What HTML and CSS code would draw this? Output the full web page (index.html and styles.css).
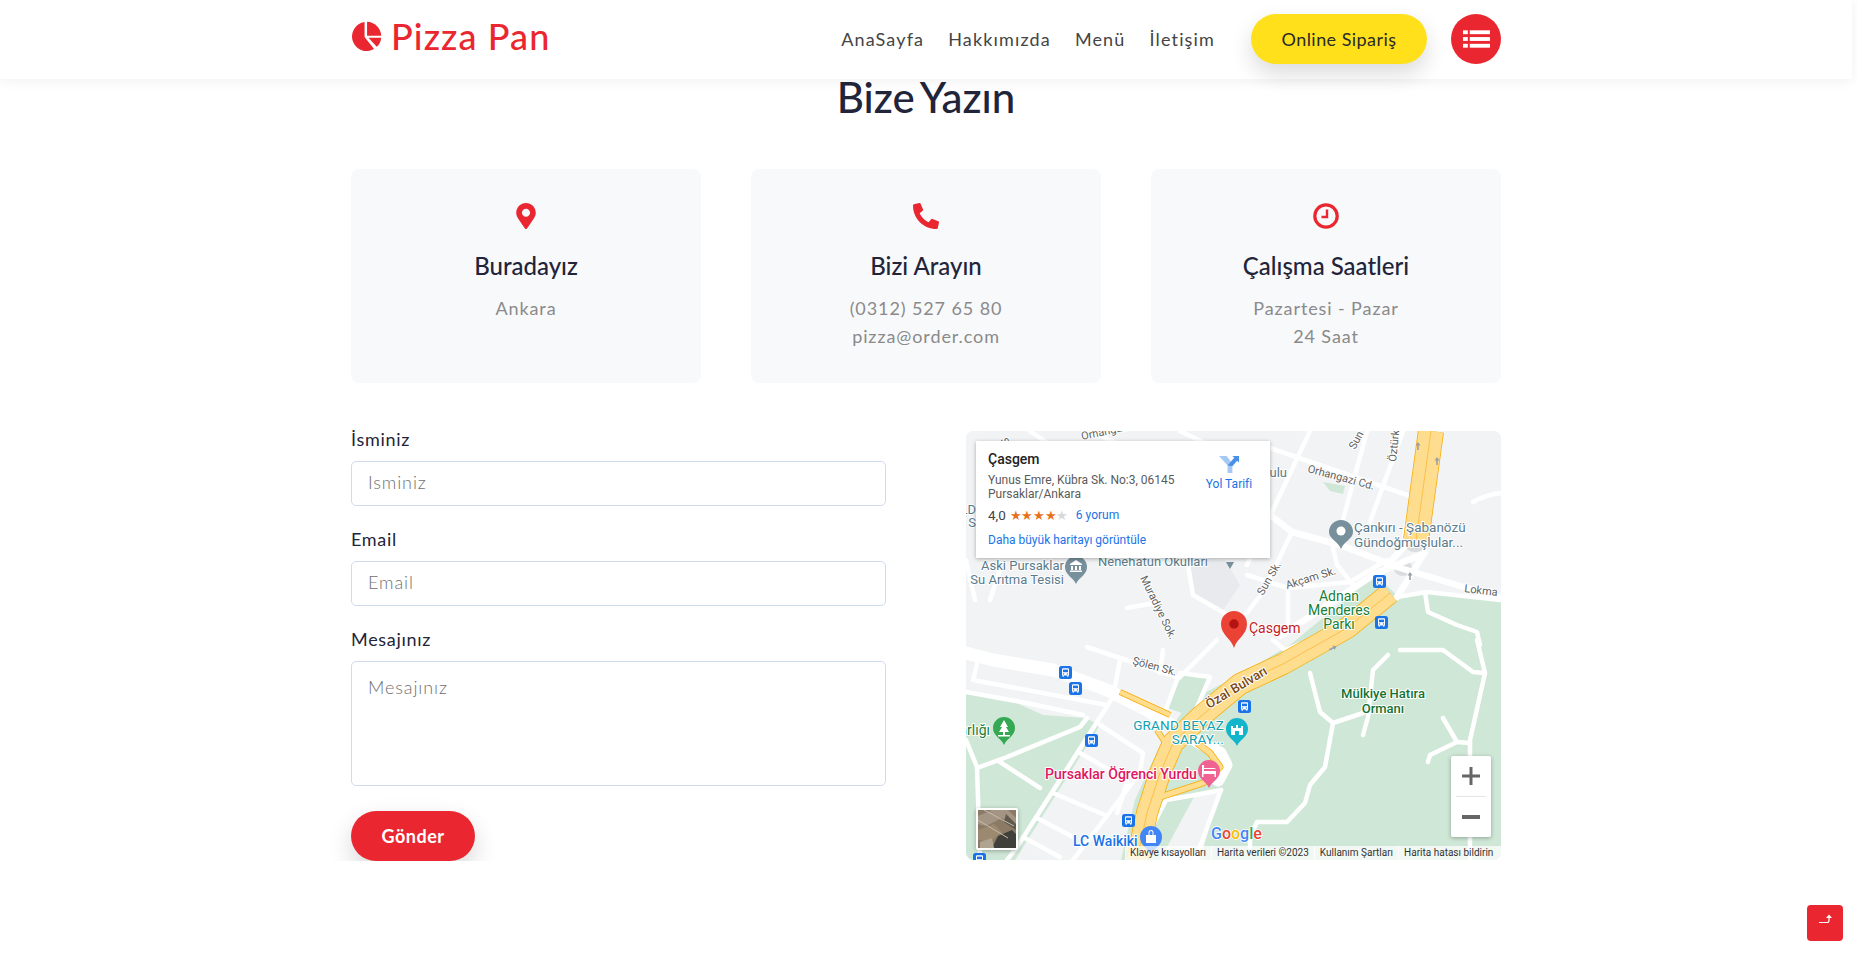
FILE: index.html
```html
<!DOCTYPE html>
<html lang="tr">
<head>
<meta charset="utf-8">
<title>Pizza Pan - Bize Yazın</title>
<link rel="stylesheet" href="styles.css">
</head>
<body>
<header class="site-header">
  <div class="container header-row">
    <a class="logo" href="#">
      <svg class="logo-icon" viewBox="0 0 32 32"><path d="M14 1.1V16.6L23.8 28.8A15 15 0 1 1 14 1.1Z"/><path d="M16.6 .8A15.2 15.2 0 0 1 31.2 15.2H16.6Z"/><path d="M18 17.2H31.2A15 15 0 0 1 26.6 26.7Z"/></svg>
      <span>Pizza Pan</span>
    </a>
    <nav class="nav">
      <a href="#">AnaSayfa</a>
      <a href="#">Hakkımızda</a>
      <a href="#">Menü</a>
      <a href="#">İletişim</a>
    </nav>
    <a class="order-btn" href="#">Online Sipariş</a>
    <a class="menu-btn" href="#" aria-label="Menü">
      <svg viewBox="0 0 28 20"><rect x="0" y="1" width="5" height="4"/><rect x="7" y="1" width="21" height="4"/><rect x="0" y="8" width="5" height="4"/><rect x="7" y="8" width="21" height="4"/><rect x="0" y="15" width="5" height="4"/><rect x="7" y="15" width="21" height="4"/></svg>
    </a>
  </div>
</header>

<main class="container">
  <h1 class="page-title">Bize Yazın</h1>

  <section class="cards">
    <article class="card">
      <svg class="card-icon" viewBox="0 0 384 512"><path d="M172.268 501.67C26.97 291.031 0 268.413 0 192 0 85.961 85.961 0 192 0s192 85.961 192 192c0 76.413-26.97 99.031-172.268 309.67-9.535 13.774-29.93 13.773-39.464 0zM192 272c44.183 0 80-35.817 80-80s-35.817-80-80-80-80 35.817-80 80 35.817 80 80 80z"/></svg>
      <h2>Buradayız</h2>
      <p>Ankara</p>
    </article>
    <article class="card">
      <svg class="card-icon" viewBox="0 0 512 512"><path d="M497.39 361.8l-112-48a24 24 0 0 0-28 6.9l-49.6 60.6A370.66 370.66 0 0 1 130.6 204.11l60.6-49.6a23.94 23.94 0 0 0 6.9-28l-48-112A24.16 24.16 0 0 0 122.6.61l-104 24A24 24 0 0 0 0 48c0 256.5 207.9 464 464 464a24 24 0 0 0 23.4-18.6l24-104a24.29 24.29 0 0 0-14.01-27.6z"/></svg>
      <h2>Bizi Arayın</h2>
      <p>(0312) 527 65 80</p>
      <p>pizza@order.com</p>
    </article>
    <article class="card">
      <svg class="card-icon" viewBox="0 0 26 26"><circle class="clock-ring" cx="13" cy="13" r="11.2"/><path class="clock-hand" d="M14 6.5V14H8.5"/></svg>
      <h2>Çalışma Saatleri</h2>
      <p>Pazartesi - Pazar</p>
      <p>24 Saat</p>
    </article>
  </section>

  <section class="contact">
    <form class="form">
      <div class="field">
        <label for="ad">İsminiz</label>
        <input id="ad" type="text" placeholder="Isminiz">
      </div>
      <div class="field">
        <label for="mail">Email</label>
        <input id="mail" type="text" placeholder="Email">
      </div>
      <div class="field">
        <label for="mesaj">Mesajınız</label>
        <textarea id="mesaj" placeholder="Mesajınız"></textarea>
      </div>
      <button class="send-btn" type="button">Gönder</button>
    </form>

    <div class="map">
      <svg class="map-canvas" viewBox="966 431 535 429">
        <defs>
          <symbol id="bus" viewBox="0 0 13 13">
            <rect width="13" height="13" rx="2.5" fill="#1a73e8"/>
            <path d="M3 3.2Q3 2.2 4 2.2H9Q10 2.2 10 3.2V9.6H9.4V10.8H8.2V9.6H4.8V10.8H3.6V9.6H3Z" fill="#fff"/>
            <rect x="4" y="3.6" width="5" height="2.6" fill="#1a73e8"/>
            <rect x="4" y="7.4" width="1.2" height="1.1" fill="#1a73e8"/><rect x="7.8" y="7.4" width="1.2" height="1.1" fill="#1a73e8"/>
          </symbol>
          <symbol id="harrow" viewBox="0 0 8 8"><path d="M4 0L6.5 3.4H4.8V8H3.2V3.4H1.5Z" fill="#9aa0a6"/></symbol>
        </defs>

        <rect x="966" y="431" width="535" height="429" fill="#f1f3f4"/>

        <g class="green">
          <path d="M966 693L1003 697L1043 715L1085 718L1100 725L1015 860H966Z"/>
          <path d="M1121 860L1135 800L1160 745L1190 700L1230 680L1290 645L1375 575L1400 598L1427 592L1501 602V860H1200L1220 790L1195 795L1160 860Z"/>
          <path d="M1180 673L1210 677L1193 717L1168 708Z"/>
          <path d="M1323 482L1345 486L1343 494L1330 491Z"/>
          <path d="M966 770H976L979 820L966 810Z"/>
        </g>
        <path d="M1187 558L1193 595L1222 612L1240 585L1225 560Z" fill="#e8eaed"/>
        <ellipse cx="1403" cy="568" rx="9" ry="8" fill="#dadce0"/>
        <ellipse cx="1415" cy="548" rx="8" ry="4" fill="#dadce0"/>

        <g class="road w5">
          <path d="M1270 448L1413 497"/>
          <path d="M1310 431L1247 565"/>
          <path d="M1367 431L1343 520"/>
          <path d="M1403 431L1370 522"/>
          <path d="M1292 532L1263 592L1243 618"/>
          <path d="M1247 575L1288 588L1350 582L1387 560"/>
          <path d="M1333 548L1337 565L1353 585"/>
          <path d="M1288 588V632"/>
          <path d="M1127 608L1160 602"/>
          <path d="M1187 558L1193 595L1240 622"/>
          <path d="M1473 502Q1485 495 1501 493"/>
          <path d="M966 692L1027 703L1083 715"/>
          <path d="M966 740L977 767L980 860"/>
          <path d="M977 768L1007 757L1080 727L1087 718"/>
          <path d="M1000 762L1040 788"/>
          <path d="M1113 697L1017 847L1007 860"/>
          <path d="M1100 725L1143 753L1140 773L1073 860"/>
          <path d="M1080 753L1127 780"/>
          <path d="M1053 793L1093 810L1105 815"/>
          <path d="M1037 818L1073 837"/>
          <path d="M1023 837L1060 857"/>
          <path d="M1087 647L1120 658L1177 677"/>
          <path d="M1120 660L1113 697"/>
          <path d="M1163 650L1160 673"/>
          <path d="M1217 640L1177 680L1163 717"/>
          <path d="M1127 783L1117 813"/>
          <path d="M978 660L973 680L1107 705"/>
          <path d="M1180 673L1210 677L1193 717"/>
          <path d="M1166 800L1195 795L1221 790"/>
          <path d="M1135 860L1166 800"/>
          <path d="M1221 790L1195 860"/>
          <path d="M1030 431L1050 445"/>
          <path d="M1090 431L1120 445"/>
          <path d="M966 560L975 600"/>
          <path d="M1203 442L1180 431"/>
          <path d="M1000 570L990 600"/>
          <path d="M1400 650H1443L1473 672L1485 673"/>
          <path d="M1477 640L1485 673L1470 740V756"/>
          <path d="M1388 655L1373 670L1368 717L1363 735"/>
          <path d="M1310 673L1320 712L1333 723L1363 713"/>
          <path d="M1333 723L1325 767L1310 785L1305 803L1287 822H1257L1250 837V847"/>
          <path d="M1443 718L1457 742L1430 755L1428 762"/>
          <path d="M1457 742L1470 743"/>
          <path d="M1470 837V860"/>
          <path d="M1397 597L1427 592L1501 600"/>
          <path d="M1425 592L1428 612L1457 625L1477 632L1480 645"/>
          <path d="M1273 640L1285 650L1310 640"/>
        </g>
        <g class="road w7">
          <path d="M1270 515L1292 532L1340 545L1400 568L1467 588L1501 598"/>
          <path d="M1280 636L1375 574L1420 555"/>
          <path d="M1413 497L1403 548L1387 565"/>
          <path d="M1397 597L1425 552"/>
        </g>
        <path class="road w13" d="M966 653L993 660L1053 670L1107 690L1147 710L1200 743L1220 753L1226 765L1218 780"/>

        <g class="highway">
          <path class="hw-edge h26" d="M1431 431L1416 540"/>
          <path class="hw-edge h22" d="M1390 593L1347 628L1283 664L1240 684L1200 717L1173 743L1160 773L1147 813L1137 860"/>
          <path class="hw-edge h5" d="M1120 692L1170 715"/>
          <path class="hw-edge h5" d="M1157 730L1170 750"/>
          <path class="hw-edge h7" d="M1160 797L1203 783L1220 767L1210 753L1197 743"/>
          <path class="hw-fill h26" d="M1431 431L1416 540"/>
          <path class="hw-fill h22" d="M1390 593L1347 628L1283 664L1240 684L1200 717L1173 743L1160 773L1147 813L1137 860"/>
          <path class="hw-fill h5" d="M1120 692L1170 715"/>
          <path class="hw-fill h5" d="M1157 730L1170 750"/>
          <path class="hw-fill h7" d="M1160 797L1203 783L1220 767L1210 753L1197 743"/>
          <path class="hw-line" d="M1431 431L1416 540"/>
          <path class="hw-line" d="M1390 593L1347 628L1283 664L1240 684L1200 717L1173 743L1160 773L1147 813L1137 860"/>
        </g>
        <use href="#harrow" x="1414" y="441" width="8" height="10"/>
        <use href="#harrow" x="1433" y="456" width="8" height="10"/>
        <use href="#harrow" x="1406" y="571" width="8" height="10"/>
        <use href="#harrow" x="1329" y="643" width="8" height="10" transform="rotate(65 1333 648)"/>

        <g class="lbl-road">
          <text x="1082" y="440" transform="rotate(-12 1082 440)">Orhangazi</text>
          <text x="1000" y="440" transform="rotate(65 1000 440)">Sun</text>
          <text x="1307" y="472" transform="rotate(15 1307 472)">Orhangazi Cd.</text>
          <text x="1355" y="450" transform="rotate(-62 1355 450)">Sun</text>
          <text x="1396" y="462" transform="rotate(-84 1396 462)">Öztürk</text>
          <text x="1263" y="596" transform="rotate(-60 1263 596)">Sun Sk.</text>
          <text x="1287" y="589" transform="rotate(-17 1287 589)">Akçam Sk.</text>
          <text x="1464" y="592" transform="rotate(7 1464 592)">Lokma</text>
          <text x="1140" y="578" transform="rotate(64 1140 578)">Muradiye Sok.</text>
          <text x="1132" y="664" transform="rotate(15 1132 664)">Şölen Sk.</text>
        </g>
        <text class="lbl-brown" x="1209" y="709" transform="rotate(-31 1209 709)">Özal Bulvarı</text>

        <g class="lbl-poi">
          <text x="1064" y="570" text-anchor="end">Aski Pursaklar</text>
          <text x="1064" y="584" text-anchor="end">Su Arıtma Tesisi</text>
          <text x="1098" y="566">Nenehatun Okulları</text>
          <text x="1287" y="477" text-anchor="end">Okulu</text>
          <text x="976" y="514" text-anchor="end">LD</text>
          <text x="976" y="527" text-anchor="end">S</text>
          <text x="1354" y="532" class="big">Çankırı - Şabanözü</text>
          <text x="1354" y="547" class="big">Gündoğmuşlular...</text>
        </g>
        <g class="lbl-green">
          <text x="1339" y="601">Adnan</text>
          <text x="1339" y="615">Menderes</text>
          <text x="1339" y="629">Parkı</text>
          <text x="1383" y="698" class="bold">Mülkiye Hatıra</text>
          <text x="1383" y="713" class="bold">Ormanı</text>
          <text x="990" y="735" text-anchor="end">arlığı</text>
        </g>
        <g class="lbl-teal">
          <text x="1224" y="730" text-anchor="end">GRAND BEYAZ</text>
          <text x="1224" y="744" text-anchor="end">SARAY...</text>
        </g>
        <text class="lbl-pink" x="1045" y="779">Pursaklar Öğrenci Yurdu</text>
        <text class="lbl-blue" x="1073" y="846">LC Waikiki</text>
        <text class="lbl-red" x="1249" y="633">Çasgem</text>

        <path d="M1076 584C1073 577 1065 575 1065 567A11 11 0 0 1 1087 567C1087 575 1079 577 1076 584Z" fill="#78909c"/>
        <path d="M1070 564L1076 560L1082 564V565H1070ZM1071 566H1073V570H1071ZM1075 566H1077V570H1075ZM1079 566H1081V570H1079ZM1070 570.500H1082V572H1070Z" fill="#fff"/>
        <path d="M1230 569L1226 562H1234Z" fill="#78909c"/>
        <path d="M1341 549C1338 541 1329 539 1329 532A12 12 0 0 1 1353 532C1353 539 1344 541 1341 549Z" fill="#78909c"/>
        <circle cx="1341" cy="531" r="4.500" fill="#fff"/>

        <path d="M1004 745C1001 738 993 736 993 728A11 11 0 0 1 1015 728C1015 736 1007 738 1004 745Z" fill="#34a853"/>
        <path d="M1004 720L1008 727H1006L1009 732H1005V735H1010V736.500H998V735H1003V732H999L1002 727H1000Z" fill="#fff"/>

        <path d="M1237 746C1234 739 1226 737 1226 729A11 11 0 0 1 1248 729C1248 737 1240 739 1237 746Z" fill="#12b5cb"/>
        <path d="M1231 735V726H1233V728H1236V725H1238V728H1241V726H1243V735H1239V731H1235V735Z" fill="#fff"/>

        <path d="M1209 788C1206 781 1198 779 1198 771A11 11 0 0 1 1220 771C1220 779 1212 781 1209 788Z" fill="#f06292"/>
        <path d="M1202 765H1204V771H1216V769H1203.500V768H1214Q1216 768 1216 770V777H1214.500V774H1203.500V777H1202Z" fill="#fff"/>

        <path d="M1151 855C1148 848 1140 846 1140 837A11 11 0 0 1 1162 837C1162 846 1154 848 1151 855Z" fill="#4285f4"/>
        <path d="M1146 835H1156V843H1146ZM1148.500 835V832.500A2.500 2.500 0 0 1 1153.500 832.500V835H1152.500V832.500A1.500 1.500 0 0 0 1149.500 832.500V835Z" fill="#fff"/>

        <use href="#bus" x="1373" y="575" width="13" height="13"/>
        <use href="#bus" x="1375" y="616" width="13" height="13"/>
        <use href="#bus" x="1059" y="666" width="13" height="13"/>
        <use href="#bus" x="1069" y="682" width="13" height="13"/>
        <use href="#bus" x="1085" y="734" width="13" height="13"/>
        <use href="#bus" x="1122" y="814" width="13" height="13"/>
        <use href="#bus" x="973" y="853" width="13" height="13"/>
        <use href="#bus" x="1238" y="700" width="13" height="13"/>

        <path d="M1234 648C1231 638 1221 635 1221 624A13 13 0 0 1 1247 624C1247 635 1237 638 1234 648Z" fill="#ea4335"/>
        <circle cx="1234" cy="624" r="4.700" fill="#b31412"/>

        <text class="g-logo" x="1211" y="839"><tspan fill="#4285f4">G</tspan><tspan fill="#ea4335">o</tspan><tspan fill="#fbbc04">o</tspan><tspan fill="#4285f4">g</tspan><tspan fill="#34a853">l</tspan><tspan fill="#ea4335">e</tspan></text>
      </svg>

      <div class="map-card">
        <div class="map-card-body">
          <div class="place-name">Çasgem</div>
          <div class="place-addr">Yunus Emre, Kübra Sk. No:3, 06145<br>Pursaklar/Ankara</div>
          <div class="place-rating">
            <span class="rate-num">4,0</span>
            <span class="stars">★★★★<span class="star-off">★</span></span>
            <a href="#">6 yorum</a>
          </div>
          <a class="place-large" href="#">Daha büyük haritayı görüntüle</a>
        </div>
        <a class="place-dir" href="#">
          <svg viewBox="0 0 22 20"><path d="M0 2H8L14 10V20H9V12Z" fill="#a6c8f4"/><path d="M9 12L16 4L14 2H21V9L19 7L14 13Z" fill="#4a90e8"/></svg>
          <span>Yol Tarifi</span>
        </a>
      </div>

      <div class="map-thumb">
        <svg viewBox="0 0 38 38"><rect width="38" height="38" fill="#8a7a66"/><path d="M0 6L14 0H30L38 8V14L24 8L8 16L0 14Z" fill="#a39484"/><path d="M0 20L16 14L24 22L12 32L0 30Z" fill="#9c8a70"/><path d="M14 38L20 26L34 20L38 24V38Z" fill="#3f403a"/><path d="M28 4L38 14V20L26 12Z" fill="#5e5a4e"/><path d="M2 32L14 28L16 38H2Z" fill="#b0a490"/><path d="M0 10L30 28M6 0L36 16" stroke="#c6bba8" stroke-width="1"/></svg>
      </div>

      <div class="zoom-ctrl">
        <button type="button" class="zoom-btn" aria-label="Yakınlaştır"><svg viewBox="0 0 18 18"><path d="M7.500 0H10.500V7.500H18V10.500H10.500V18H7.500V10.500H0V7.500H7.500Z"/></svg></button>
        <span class="zoom-sep"></span>
        <button type="button" class="zoom-btn" aria-label="Uzaklaştır"><svg viewBox="0 0 18 18"><rect y="7" width="18" height="4"/></svg></button>
      </div>

      <div class="map-attr">
        <span>Klavye kısayolları</span>
        <span>Harita verileri ©2023</span>
        <span>Kullanım Şartları</span>
        <span>Harita hatası bildirin</span>
      </div>
    </div>
  </section>
</main>

<a class="to-top" href="#" aria-label="Yukarı">
  <svg viewBox="0 0 14 10"><path d="M1 8.500H9.500Q11 8.500 11 6V3" fill="none" stroke="#fff" stroke-width="1.200"/><path d="M8 4L11 .5L14 4Z" fill="#fff"/></svg>
</a>
</body>
</html>
```

FILE: styles.css
```css
* { box-sizing: border-box; }

html, body { margin: 0; padding: 0; }

body {
  padding-right: 5px;
  background: #fff;
  color: #22243a;
  font-family: Lato, "Liberation Sans", sans-serif;
}

a { text-decoration: none; color: inherit; }

.container { width: 1150px; margin: 0 auto; }

.site-header {
  height: 79px;
  background: #fff;
  box-shadow: 0 2px 12px rgba(0, 0, 0, .06);
  position: relative;
  z-index: 2;
}

.header-row { display: flex; align-items: center; height: 78px; }

.logo { display: flex; align-items: center; gap: 9px; margin-bottom: 6px; color: #ea2730; font-size: 36px; font-weight: 500; letter-spacing: 1.1px; line-height: 1; }
.logo-icon { width: 31px; height: 31px; fill: #ea2730; }

.nav { display: flex; gap: 24px; margin-left: auto; font-size: 18px; letter-spacing: 1.15px; color: #444; }

.order-btn {
  margin-left: 36px;
  width: 176px;
  height: 50px;
  border-radius: 25px;
  background: #ffe01b;
  color: #2a2a2a;
  font-size: 18px;
  letter-spacing: .45px;
  display: flex;
  align-items: center;
  justify-content: center;
  box-shadow: 0 10px 22px rgba(0, 0, 0, .14);
}

.menu-btn {
  margin-left: 24px;
  width: 50px;
  height: 50px;
  border-radius: 50%;
  background: #ea2730;
  display: flex;
  align-items: center;
  justify-content: center;
}
.menu-btn svg { width: 27px; height: 20px; fill: #fff; }

.page-title {
  margin: 0 0 54px;
  height: 36px;
  font-size: 42px;
  line-height: 36px;
  font-weight: 500;
  word-spacing: -4px;
  text-align: center;
  color: #22243a;
}

.cards { display: grid; grid-template-columns: repeat(3, 350px); gap: 50px; }

.card {
  height: 214px;
  padding-top: 34px;
  border-radius: 8px;
  background: #f8f9fb;
  text-align: center;
}
.card-icon { display: block; width: 26px; height: 26px; margin: 0 auto; fill: #ea2730; }
.clock-ring { fill: none; stroke: #ea2730; stroke-width: 3.2; }
.clock-hand { fill: none; stroke: #ea2730; stroke-width: 2.4; }
.card h2 { margin: 22px 0 13px; font-size: 24px; line-height: 30px; font-weight: 500; color: #22243a; }
.card p { margin: 0; font-size: 18px; line-height: 28px; letter-spacing: .9px; color: #8a8a8a; font-weight: 400; }

.contact { display: grid; grid-template-columns: 535px 535px; gap: 80px; margin-top: 48px; }

.field { display: flex; flex-direction: column; margin-bottom: 25px; }
.field label { height: 16px; line-height: 16px; margin-bottom: 14px; font-size: 18px; letter-spacing: .7px; color: #22243a; }
.field input, .field textarea {
  width: 100%;
  border: 1px solid #cfdcee;
  border-radius: 5px;
  background: #fff;
  font: 300 18px Lato, "Liberation Sans", sans-serif;
  letter-spacing: .9px;
  color: #333;
  padding: 0 16px;
  outline: none;
}
.field input { height: 45px; padding-bottom: 4px; }
.field textarea { height: 125px; padding-top: 14px; resize: none; display: block; }
.field input::placeholder, .field textarea::placeholder { color: #6f6f6f; opacity: 1; }

.send-btn {
  display: block;
  width: 124px;
  height: 50px;
  border: 0;
  border-radius: 25px;
  background: #ea2730;
  color: #fff;
  font: 700 18px Lato, "Liberation Sans", sans-serif;
  letter-spacing: .5px;
  box-shadow: 0 10px 24px rgba(0, 0, 0, .16);
}

.map {
  position: relative;
  height: 429px;
  border-radius: 8px;
  overflow: hidden;
  background: #f1f3f4;
  font-family: Roboto, "Liberation Sans", sans-serif;
}
.map-canvas { display: block; width: 535px; height: 429px; }

.green path { fill: #cfe7d6; }
.road path, path.road { fill: none; stroke: #fff; stroke-linecap: round; stroke-linejoin: round; }
.w5 path { stroke-width: 4.5; }
.w7 path { stroke-width: 6.5; }
path.w13 { stroke-width: 13; }

.hw-edge, .hw-fill, .hw-line { fill: none; stroke-linejoin: round; }
.hw-edge { stroke: #f9ab00; }
.hw-fill { stroke: #fedd8f; }
.hw-line { stroke: #f9b93a; stroke-width: .8; }
.hw-edge.h26 { stroke-width: 26; } .hw-fill.h26 { stroke-width: 24.500; }
.hw-edge.h22 { stroke-width: 22; } .hw-fill.h22 { stroke-width: 20.500; }
.hw-edge.h5 { stroke-width: 6; } .hw-fill.h5 { stroke-width: 4.500; }
.hw-edge.h7 { stroke-width: 7; } .hw-fill.h7 { stroke-width: 5.500; }

.map-canvas text { paint-order: stroke; stroke: #fff; stroke-width: 2px; stroke-linejoin: round; }
.lbl-road text { font-size: 11px; fill: #616161; }
.lbl-poi text { font-size: 13px; fill: #5b7b8c; }
.lbl-poi .big { font-size: 13.500px; }
.lbl-green text { font-size: 14px; fill: #188038; text-anchor: middle; }
.lbl-green text[text-anchor="end"] { text-anchor: end; }
.lbl-green .bold { font-size: 13px; font-weight: 500; fill: #137333; }
.lbl-teal text { font-size: 13.500px; fill: #129eaf; letter-spacing: .2px; }
.lbl-brown { font-size: 13px; font-weight: 500; fill: #7b4a12; }
.lbl-pink { font-size: 14px; font-weight: 500; fill: #e0165e; }
.lbl-blue { font-size: 14px; font-weight: 500; fill: #1a73e8; }
.lbl-red { font-size: 14px; fill: #c5221f; }
.map-canvas .g-logo { font-size: 16px; font-weight: 500; stroke-width: 1.500px; }

.map-card {
  position: absolute;
  left: 10px;
  top: 10px;
  width: 294px;
  height: 117px;
  padding: 9px 12px;
  background: #fff;
  box-shadow: 0 1px 4px rgba(0, 0, 0, .3);
  display: flex;
  justify-content: space-between;
  color: #5b5b5b;
  font-size: 12px;
}
.place-name { font-size: 14px; font-weight: 500; color: #222; line-height: 18px; }
.place-addr { margin-top: 5px; line-height: 14px; white-space: nowrap; }
.place-rating { display: flex; align-items: center; margin-top: 5px; height: 18px; }
.rate-num { font-size: 13.500px; color: #444; }
.stars { margin-left: 4px; color: #e7711b; font-size: 13px; letter-spacing: -.4px; width: 66px; }
.star-off { color: #d8d8d8; }
.place-rating a, .place-large, .place-dir { color: #1a73e8; }
.place-large { display: block; margin-top: 9px; line-height: 14px; }
.place-dir { display: flex; flex-direction: column; align-items: center; margin-top: 4px; width: 48px; flex: none; margin-right: 5px; }
.place-dir svg { width: 21px; height: 19px; margin-bottom: 4px; }
.place-dir span { white-space: nowrap; }

.map-thumb {
  position: absolute;
  left: 10px;
  bottom: 10px;
  width: 42px;
  height: 42px;
  border: 2px solid #fff;
  border-radius: 2px;
  box-shadow: 0 1px 4px rgba(0, 0, 0, .3);
  overflow: hidden;
}
.map-thumb svg { display: block; width: 38px; height: 38px; }

.zoom-ctrl {
  position: absolute;
  right: 10px;
  top: 325px;
  width: 40px;
  height: 81px;
  background: #fff;
  border-radius: 2px;
  box-shadow: 0 1px 4px rgba(0, 0, 0, .3);
  display: flex;
  flex-direction: column;
  align-items: center;
}
.zoom-btn { width: 40px; height: 40px; border: 0; padding: 0; background: none; display: flex; align-items: center; justify-content: center; }
.zoom-btn svg { width: 18px; height: 18px; fill: #666; }
.zoom-sep { width: 30px; height: 1px; background: #e6e6e6; }

.map-attr {
  position: absolute;
  right: 0;
  bottom: 0;
  height: 14px;
  width: 376px;
  display: flex;
  background: rgba(255, 255, 255, .72);
  font-size: 10px;
  line-height: 14px;
  color: #333;
  white-space: nowrap;
}
.map-attr span { padding: 0 5px; border-left: 1px solid rgba(255, 255, 255, .8); }
.map-attr span:first-child { border-left: 0; }

.to-top {
  position: fixed;
  right: 14px;
  bottom: 15px;
  width: 36px;
  height: 36px;
  padding-bottom: 8px;
  border-radius: 4px;
  background: #ea2730;
  display: flex;
  align-items: center;
  justify-content: center;
}
.to-top svg { width: 14px; height: 10px; }
```
